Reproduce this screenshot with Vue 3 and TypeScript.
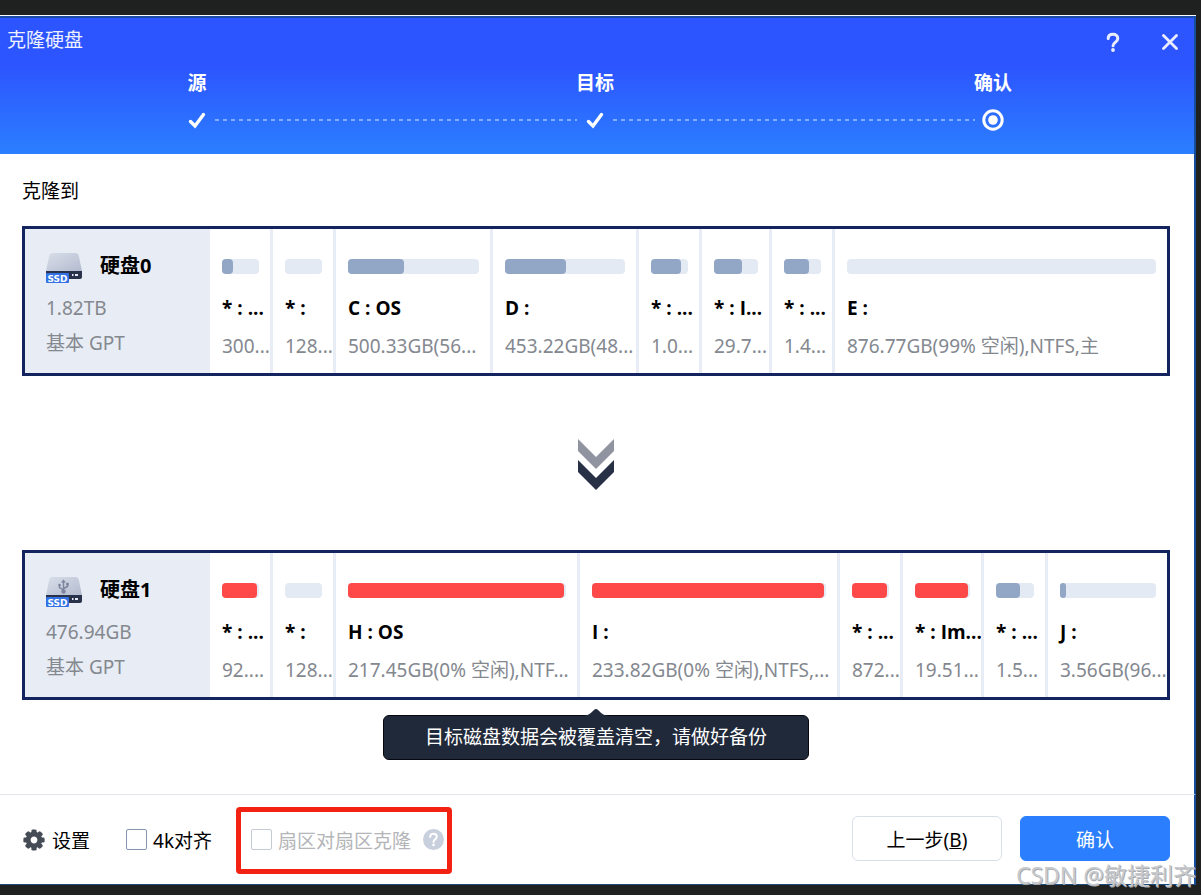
<script setup lang="ts">
import { ref } from 'vue'

interface Partition {
  name: string
  detail: string
  share: number
  used: number
  overwrite?: boolean
}

interface Disk {
  name: string
  size: string
  scheme: string
  usb: boolean
  partitions: Partition[]
}

const steps: string[] = ['源', '目标', '确认']

const source: Disk = {
  name: '硬盘0',
  size: '1.82TB',
  scheme: '基本 GPT',
  usb: false,
  partitions: [
    { name: '* : ...', detail: '300...', share: 63, used: 29 },
    { name: '* :', detail: '128...', share: 63, used: 0 },
    { name: 'C : OS', detail: '500.33GB(56...', share: 157, used: 43 },
    { name: 'D :', detail: '453.22GB(48...', share: 146, used: 51 },
    { name: '* : ...', detail: '1.0...', share: 63, used: 82 },
    { name: '* : I...', detail: '29.7...', share: 70, used: 64 },
    { name: '* : ...', detail: '1.4...', share: 63, used: 68 },
    { name: 'E :', detail: '876.77GB(99% 空闲),NTFS,主', share: 332, used: 0 },
  ],
}

const target: Disk = {
  name: '硬盘1',
  size: '476.94GB',
  scheme: '基本 GPT',
  usb: true,
  partitions: [
    { name: '* : ...', detail: '92....', share: 63, used: 95, overwrite: true },
    { name: '* :', detail: '128...', share: 63, used: 0 },
    { name: 'H : OS', detail: '217.45GB(0% 空闲),NTF...', share: 244, used: 99, overwrite: true },
    { name: 'I :', detail: '233.82GB(0% 空闲),NTFS,...', share: 260, used: 99, overwrite: true },
    { name: '* : ...', detail: '872...', share: 63, used: 95, overwrite: true },
    { name: '* : Im...', detail: '19.51...', share: 81, used: 97, overwrite: true },
    { name: '* : ...', detail: '1.5...', share: 64, used: 63 },
    { name: 'J :', detail: '3.56GB(96...', share: 119, used: 6 },
  ],
}

const disks: Disk[] = [source, target]
const align4k = ref(false)
const sectorClone = ref(false)

function columns(disk: Disk): string {
  return disk.partitions.map((part) => `minmax(0, ${part.share}fr)`).join(' ')
}
</script>

<template>
  <div class="desktop">
    <div class="window">
      <header class="header">
        <div class="titlebar">
          <h1 class="title">克隆硬盘</h1>
          <div class="controls">
            <button class="control" type="button" aria-label="帮助">
              <svg width="14" height="20" viewBox="0 0 14 20">
                <path d="M2.200 6.400C2.200 3.600 4.300 2.200 7 2.200s4.800 1.500 4.800 4.200c0 2-1.200 2.900-2.600 4C7.800 11.500 7 12.200 7 13.800" fill="none" stroke="#e9edff" stroke-width="3" stroke-linecap="round" />
                <circle cx="7" cy="18" r="1.900" fill="#e9edff" />
              </svg>
            </button>
            <button class="control" type="button" aria-label="关闭">
              <svg width="16" height="16" viewBox="0 0 16 16">
                <path d="M1.500 1.500 14.500 14.500M14.500 1.500 1.500 14.500" fill="none" stroke="#e9edff" stroke-width="2.800" stroke-linecap="round" />
              </svg>
            </button>
          </div>
        </div>
        <ol class="labels">
          <li v-for="step in steps" :key="step">{{ step }}</li>
        </ol>
        <div class="track">
          <span class="mark">
            <svg width="18" height="18" viewBox="0 0 18 18"><path d="M2.500 10.500 7 15 15.500 3.500" fill="none" stroke="#fff" stroke-width="3.400" stroke-linecap="round" /></svg>
          </span>
          <span class="dash"></span>
          <span class="mark">
            <svg width="18" height="18" viewBox="0 0 18 18"><path d="M2.500 10.500 7 15 15.500 3.500" fill="none" stroke="#fff" stroke-width="3.400" stroke-linecap="round" /></svg>
          </span>
          <span class="dash"></span>
          <span class="mark">
            <svg width="24" height="24" viewBox="0 0 24 24">
              <circle cx="12" cy="12" r="9.200" fill="none" stroke="#fff" stroke-width="3" />
              <circle cx="12" cy="12" r="4.800" fill="#fff" />
            </svg>
          </span>
        </div>
      </header>

      <main class="main">
        <h2 class="heading">克隆到</h2>
        <template v-for="(disk, index) in disks" :key="disk.name">
          <section class="disk">
            <div class="summary">
              <div class="identity">
                <svg width="36" height="30" viewBox="0 0 36 30">
                  <defs>
                    <linearGradient :id="`shell-${index}`" x1="0" y1="0" x2="1" y2="1">
                      <stop offset="0" stop-color="#d9dee9" />
                      <stop offset="1" stop-color="#b3bbcf" />
                    </linearGradient>
                  </defs>
                  <path d="M0 18 3.200 3C3.600 1 4.600 0 6.500 0h23c1.900 0 2.900 1 3.300 3L36 18z" :fill="`url(#shell-${index})`" />
                  <path d="M0 18h36v6a2 2 0 0 1-2 2H0z" fill="#28324a" />
                  <path d="M26 21h1.500v2H26zM29 21h3v2h-3z" fill="#e4e9f5" />
                  <g v-if="disk.usb" fill="none" stroke="#7c859d" stroke-width="1.400">
                    <path d="M17.500 15V4M17.500 13 13.500 10.500V8M17.500 11.500 21.500 9.500V7" />
                    <path d="M15 5.500 17.500 2.500 20 5.500z" fill="#7c859d" stroke="none" />
                    <circle cx="17.500" cy="14.500" r="2.200" fill="#7c859d" stroke="none" />
                    <circle cx="13.500" cy="8" r="1.300" fill="#7c859d" stroke="none" />
                    <path d="M20.200 5.800h2.600v2.600h-2.600z" fill="#7c859d" stroke="none" />
                  </g>
                  <rect x="0" y="20" width="23" height="10" rx="1" fill="#3272e4" />
                  <text x="11.500" y="28.500" text-anchor="middle" class="badge">SSD</text>
                </svg>
                <h3 class="disk-name">{{ disk.name }}</h3>
              </div>
              <p class="disk-info">{{ disk.size }}</p>
              <p class="disk-info">{{ disk.scheme }}</p>
            </div>
            <ul class="partitions" :style="{ gridTemplateColumns: columns(disk) }">
              <li v-for="(part, i) in disk.partitions" :key="i" class="partition">
                <div class="bar">
                  <div v-if="part.used" class="fill" :class="{ overwrite: part.overwrite }" :style="{ width: part.used + '%' }"></div>
                </div>
                <p class="part-name">{{ part.name }}</p>
                <p class="part-detail">{{ part.detail }}</p>
              </li>
            </ul>
          </section>
          <svg v-if="index === 0" class="chevrons" width="36" height="51" viewBox="0 0 36 51">
            <path d="M0 0 18 18 36 0V12L18 30 0 12z" fill="#9094a0" />
            <path d="M0 21 18 39 36 21V33L18 51 0 33z" fill="#273044" />
          </svg>
        </template>
        <div class="tip" role="note">
          <svg class="tip-arrow" width="24" height="7" viewBox="0 0 24 7">
            <path d="M0 7C5 6 7 4 10 1Q12-1 14 1C17 4 19 6 24 7z" fill="#20293a" />
          </svg>
          目标磁盘数据会被覆盖清空，请做好备份
        </div>
      </main>

      <footer class="footer">
        <button class="settings" type="button">
          <svg width="22" height="22" viewBox="-11 -11 22 22">
            <g fill="#454c56">
              <rect v-for="n in 8" :key="n" x="-2.600" y="-10.600" width="5.200" height="6" rx="1.400" :transform="`rotate(${n * 45})`" />
            </g>
            <circle r="5.800" fill="none" stroke="#454c56" stroke-width="4.800" />
          </svg>
          设置
        </button>
        <label class="option">
          <input v-model="align4k" class="check" type="checkbox" />
          4k对齐
        </label>
        <div class="highlight">
          <label class="option muted">
            <input v-model="sectorClone" class="check" type="checkbox" disabled />
            扇区对扇区克隆
          </label>
          <button class="hint" type="button" aria-label="说明">
            <svg width="21" height="21" viewBox="0 0 21 21">
              <circle cx="10.500" cy="10.500" r="10.500" fill="#c8cfdd" />
              <path d="M7.200 8C7.200 5.900 8.600 4.800 10.500 4.800s3.300 1.200 3.300 2.900c0 1.300-.8 2-1.800 2.800-1 .8-1.500 1.300-1.500 2.500" fill="none" stroke="#fff" stroke-width="2" stroke-linecap="round" />
              <circle cx="10.500" cy="15.900" r="1.300" fill="#fff" />
            </svg>
          </button>
        </div>
        <div class="actions">
          <button class="action" type="button">上一步(<u>B</u>)</button>
          <button class="action primary" type="button">确认</button>
        </div>
      </footer>
    </div>
    <span class="watermark">CSDN @敏捷利齐</span>
  </div>
</template>

<style>
body {
  margin: 0;
  background: #1e211f;
}
</style>

<style scoped>
* {
  box-sizing: border-box;
}

h1,
h2,
h3,
p,
ol,
ul {
  margin: 0;
  padding: 0;
  font-size: inherit;
  font-weight: 400;
  list-style: none;
}

button {
  padding: 0;
  border: 0;
  background: none;
  color: inherit;
  font: inherit;
  cursor: pointer;
}

svg {
  display: block;
  flex: none;
}

.desktop {
  position: relative;
  display: flex;
  min-height: 100vh;
  padding: 15px 5px 10px 0;
  background: #1e211f;
  color: #000;
  font-family: "Noto Sans", "Noto Sans CJK SC", sans-serif;
  font-size: 19px;
}

.window {
  display: flex;
  flex: 1;
  flex-direction: column;
  min-width: 0;
  border-top: 1px solid #fff;
  background: #fff;
}

.header {
  height: 138px;
  border-top: 2px solid #1b4aa8;
  border-right: 2px solid #174e9b;
  background: linear-gradient(#2d55ff 0, #2d55ff 48px, #2b7fff 100%);
  color: #fff;
}

.titlebar {
  display: flex;
  justify-content: space-between;
  height: 48px;
  padding-left: 7px;
}

.title {
  color: #eef1ff;
  line-height: 44px;
}

.controls {
  display: flex;
  gap: 9px;
}

.control {
  display: grid;
  width: 48px;
  place-items: center;
}

.labels {
  display: grid;
  grid-template-columns: repeat(3, 1fr);
  margin: 2px 2px 0 -2px;
}

.labels li {
  font-weight: 700;
  line-height: 30px;
  text-align: center;
}

.track {
  display: flex;
  align-items: center;
  height: 24px;
  margin: 10px 2px 0 -2px;
  padding: 0 calc(100% / 6 - 18px);
}

.mark {
  display: grid;
  flex: none;
  width: 36px;
  place-items: center;
}

.dash {
  flex: 1;
  height: 2px;
  background: repeating-linear-gradient(90deg, #83adff 0 4px, transparent 4px 8px);
}

.main {
  display: flex;
  flex: 1;
  flex-direction: column;
  padding: 22px 24px 34px 22px;
  border-right: 2px solid #174e9b;
}

.heading {
  margin-bottom: 20px;
  line-height: 30px;
}

.disk {
  display: flex;
  height: 150px;
  border: 3px solid #14245e;
}

.summary {
  flex: none;
  width: 185px;
  padding: 24px 0 0 21px;
  background: #e8ecf4;
}

.identity {
  display: flex;
  gap: 18px;
}

.badge {
  fill: #fff;
  font-family: "DejaVu Sans", sans-serif;
  font-size: 9px;
  font-weight: 700;
}

.disk-name {
  font-size: 20px;
  font-weight: 700;
  line-height: 26px;
}

.disk-info {
  color: #84888f;
  line-height: 35px;
}

.identity + .disk-info {
  margin-top: 8px;
}

.partitions {
  display: grid;
  flex: 1;
  min-width: 0;
}

.partition {
  padding: 30px 0 0 12px;
  border-right: 3px solid #e8ecf4;
  overflow: hidden;
  white-space: nowrap;
}

.partition:last-child {
  border-right: 0;
}

.bar {
  height: 15px;
  margin-right: 11px;
  border-radius: 4px;
  background: #e4eaf4;
}

.fill {
  height: 100%;
  border-radius: 4px;
  background: #92a6c5;
}

.fill.overwrite {
  background: #ff4848;
}

.part-name {
  margin-top: 19px;
  font-family: "Open Sans", "Noto Sans CJK SC", sans-serif;
  font-weight: 700;
  line-height: 30px;
}

.part-detail {
  margin-top: 8px;
  color: #84888f;
  line-height: 30px;
}

.chevrons {
  align-self: center;
  margin: 63px 0 60px;
}

.tip {
  position: relative;
  align-self: center;
  margin-top: 15px;
  padding: 0 41px;
  border: 1px solid #05080f;
  border-radius: 6px;
  background: #20293a;
  color: #fff;
  line-height: 43px;
}

.tip-arrow {
  position: absolute;
  bottom: 100%;
  left: calc(50% - 12px);
}

.footer {
  display: flex;
  align-items: center;
  height: 91px;
  padding: 0 24px 0 23px;
  border-top: 1px solid #e4e7ec;
  border-right: 2px solid #174e9b;
  border-bottom: 1px solid #1b4a7c;
}

.settings {
  display: flex;
  align-items: center;
  gap: 7px;
}

.option {
  display: flex;
  align-items: center;
  gap: 6px;
}

.settings + .option {
  margin-left: 36px;
}

.check {
  width: 21px;
  height: 21px;
  margin: 0;
  border: 1px solid #8795b3;
  border-radius: 2px;
  background: #fff;
  appearance: none;
}

.check:checked {
  background: #2b7fff;
}

.check:disabled {
  border-color: #c6cad4;
}

.muted {
  color: #b4b5b8;
}

.highlight {
  display: flex;
  align-items: center;
  gap: 12px;
  height: 67px;
  margin: 2px 0 0 24px;
  padding: 0 3px 2px 10px;
  border: 5px solid #f42213;
  border-radius: 4px;
}

.actions {
  display: flex;
  gap: 18px;
  margin: 0 0 2px auto;
}

.action {
  width: 150px;
  height: 45px;
  border: 1px solid #d9dfe9;
  border-radius: 6px;
}

.action.primary {
  border-color: #2b7fff;
  background: #2b7fff;
  color: #fff;
}

.watermark {
  position: absolute;
  right: 5px;
  bottom: 5px;
  color: #c8cacd;
  font-size: 23px;
  line-height: 30px;
  text-shadow: 1px 1px 0 #a6a9ad;
  pointer-events: none;
}
</style>
